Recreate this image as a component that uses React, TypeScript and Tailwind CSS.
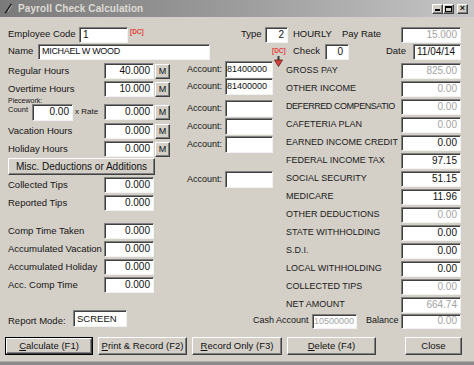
import React from "react";

const fieldBase =
  "box-border flex items-center bg-white border border-t-[#808080] border-l-[#808080] border-r-[#f2f2f2] border-b-[#f2f2f2] shadow-[inset_1px_1px_0_#404040] overflow-hidden whitespace-nowrap leading-none";

function Field({
  className = "",
  children,
  grey = false,
  left = false,
}: {
  className?: string;
  children?: React.ReactNode;
  grey?: boolean;
  left?: boolean;
}) {
  return (
    <div
      className={[
        fieldBase,
        left ? "justify-start pl-[3px]" : "justify-end pr-[3px]",
        grey ? "text-[#a3a3a3]" : "text-[#111]",
        className,
      ].join(" ")}
    >
      {children}
    </div>
  );
}

const raised =
  "box-border bg-[#d4d0c8] border border-t-white border-l-white border-r-[#404040] border-b-[#404040] shadow-[inset_-1px_-1px_0_#808080] flex items-center justify-center leading-none text-[#111]";

function MBtn() {
  return <div className={raised + " ml-[1px] w-[15px] h-[15px] text-[9px]"}>M</div>;
}

function LeftRow({ label, value, m = false }: { label: string; value: string; m?: boolean }) {
  return (
    <div className="flex items-center h-[18px]">
      <span className="w-[96px] whitespace-nowrap">{label}</span>
      <Field className="w-[50px] h-[16px] text-[10px]">{value}</Field>
      {m && <MBtn />}
    </div>
  );
}

function RightRow({
  label,
  value,
  grey = false,
  last = false,
  tight = false,
}: {
  label: string;
  value: string;
  grey?: boolean;
  last?: boolean;
  tight?: boolean;
}) {
  return (
    <div className={"flex items-center " + (last ? "h-[17px]" : "h-[18px]")}>
      <span
        className={
          "w-[115px] whitespace-nowrap text-[9px] text-[#1a1a1a] " +
          (tight ? "tracking-[-0.45px]" : "")
        }
      >
        {label}
      </span>
      <Field grey={grey} className="w-[60px] h-[16px] text-[10px]">
        {value}
      </Field>
    </div>
  );
}

function AccRow({
  value = "",
  className = "",
  children,
}: {
  value?: string;
  className?: string;
  children?: React.ReactNode;
}) {
  return (
    <div className={"relative flex items-center h-[17px] " + className}>
      <span className="w-[54px] pl-[16px] text-[9px] whitespace-nowrap">Account:</span>
      <Field left className="w-[48px] h-[17px] text-[9px] !pl-[1px]">
        {value}
      </Field>
      {children}
    </div>
  );
}

function DC({ className = "" }: { className?: string }) {
  return (
    <span className={"text-[6.5px] font-bold text-[#e0403a] leading-none " + className}>[DC]</span>
  );
}

export default function App() {
  return (
    <div className="w-[474px] h-[365px] bg-[#d4d0c8] flex flex-col overflow-hidden text-[#141414] font-['Liberation_Sans',Arial,sans-serif] text-[9.5px]">
      {/* Title bar */}
      <div className="h-[17px] shrink-0 flex items-center bg-linear-to-r from-[#7a7a7a] via-[#9c9c9c] to-[#c6c6c6] pl-[4px] pr-[6px]">
        <svg width="9" height="11" viewBox="0 0 9 11">
          <path d="M1 10 L2.5 8.5 L7.5 1" stroke="#1e1e1e" strokeWidth="1.6" fill="none" />
          <path d="M3.5 9 L8 2" stroke="#e8e8e8" strokeWidth="0.6" fill="none" />
        </svg>
        <span className="ml-[5px] text-[10px] font-bold text-[#dedbd5] tracking-[0.1px]">
          Payroll Check Calculation
        </span>
        <div className="ml-auto flex items-center">
          <div className={raised + " w-[11px] h-[10px] !items-end pb-[2px]"}>
            <div className="w-[5px] h-[2px] bg-black" />
          </div>
          <div className={raised + " w-[11px] h-[10px]"}>
            <div className="w-[7px] h-[6px] border border-black border-t-2" />
          </div>
          <div className={raised + " ml-[3px] w-[11px] h-[10px] text-[9px] font-bold"}>×</div>
        </div>
      </div>

      {/* Header rows */}
      <div className="mt-[9px] flex items-center h-[17px] pl-2">
        <div className="w-[233px] flex items-center">
          <span className="w-[71px] whitespace-nowrap">Employee Code</span>
          <Field left className="w-[49px] h-[16px] text-[10px]">
            1
          </Field>
          <DC className="ml-[2px] -mt-[4px]" />
        </div>
        <span className="w-[24px]">Type</span>
        <Field className="w-[23px] h-[16px] text-[10px]">2</Field>
        <span className="w-[54px] pl-[5px]">HOURLY</span>
        <span className="w-[59px]">Pay Rate</span>
        <Field grey className="w-[60px] h-[16px] text-[10px]">
          15.000
        </Field>
      </div>
      <div className="flex items-center h-[17px] pl-2">
        <span className="w-[30px]">Name</span>
        <Field left className="w-[172px] h-[16px] text-[9px] tracking-[-0.3px]">
          MICHAEL W WOOD
        </Field>
        <span className="w-[83px]" />
        <span className="w-[32px]">Check</span>
        <Field className="w-[24px] h-[16px] text-[10px] !pr-[5px]">0</Field>
        <span className="w-[64px] text-right pr-[7px]">Date</span>
        <Field left className="w-[48px] h-[16px] text-[10px]">
          11/04/14
        </Field>
      </div>

      {/* Main section */}
      <div className="flex pl-2">
        {/* Left column */}
        <div className="w-[163px] pt-[2px] flex flex-col">
          <LeftRow label="Regular Hours" value="40.000" m />
          <LeftRow label="Overtime Hours" value="10.000" m />
          <div className="h-[24px] flex flex-col">
            <span className="text-[7px] leading-[7px] h-[6px] -mt-[1px]">Piecework:</span>
            <div className="flex items-center h-[18px]">
              <span className="w-[24px] text-[7.5px] self-start mt-[3px] leading-[8px]">Count</span>
              <Field className="w-[41px] h-[17px] text-[10px]">0.00</Field>
              <span className="w-[31px] pl-[2px] text-[8px]">x Rate</span>
              <Field className="w-[50px] h-[16px] text-[10px]">0.000</Field>
              <MBtn />
            </div>
          </div>
          <LeftRow label="Vacation Hours" value="0.000" m />
          <LeftRow label="Holiday Hours" value="0.000" m />
          <div className={raised + " w-[147px] h-[17px] text-[10px]"}>Misc. Deductions or Additions</div>
          <div className="h-[1px]" />
          <LeftRow label="Collected Tips" value="0.000" />
          <LeftRow label="Reported Tips" value="0.000" />
          <div className="h-[10px]" />
          <LeftRow label="Comp Time Taken" value="0.000" />
          <LeftRow label="Accumulated Vacation" value="0.000" />
          <LeftRow label="Accumulated Holiday" value="0.000" />
          <LeftRow label="Acc. Comp Time" value="0.000" />
        </div>

        {/* Middle (Account) column */}
        <div className="w-[115px] pt-[1px] flex flex-col">
          <AccRow value="81400000">
            <div className="absolute left-[101px] -top-[13px] flex flex-col items-center">
              <DC />
              <svg width="9" height="11" viewBox="0 0 9 11" className="mt-[1px]">
                <line x1="4.5" y1="0" x2="4.5" y2="4" stroke="#3a3a3a" strokeWidth="2" />
                <polygon points="0.5,4 8.5,4 4.5,10.5" fill="#d8413a" stroke="#5a1a18" strokeWidth="0.8" />
              </svg>
            </div>
          </AccRow>
          <AccRow value="81400000" />
          <AccRow className="mt-[5px]" />
          <AccRow className="mt-[1px]" />
          <AccRow className="mt-[1px]" />
          <AccRow className="mt-[18px]" />
        </div>

        {/* Right column */}
        <div className="pt-[2px] flex flex-col">
          <RightRow label="GROSS PAY" value="825.00" grey />
          <RightRow label="OTHER INCOME" value="0.00" grey />
          <RightRow label="DEFERRED COMPENSATIO" value="0.00" grey tight />
          <RightRow label="CAFETERIA PLAN" value="0.00" grey />
          <RightRow label="EARNED INCOME CREDIT" value="0.00" />
          <RightRow label="FEDERAL INCOME TAX" value="97.15" />
          <RightRow label="SOCIAL SECURITY" value="51.15" />
          <RightRow label="MEDICARE" value="11.96" />
          <RightRow label="OTHER DEDUCTIONS" value="0.00" grey />
          <RightRow label="STATE WITHHOLDING" value="0.00" />
          <RightRow label="S.D.I." value="0.00" />
          <RightRow label="LOCAL WITHHOLDING" value="0.00" />
          <RightRow label="COLLECTED TIPS" value="0.00" grey />
          <RightRow label="NET AMOUNT" value="664.74" grey last />
        </div>
      </div>

      {/* Report mode / cash account row */}
      <div className="flex items-center h-[16px] pl-2">
        <span className="w-[65px]">Report Mode:</span>
        <Field left className="w-[54px] h-[17px] text-[9.5px] -mt-[5px]">
          SCREEN
        </Field>
        <span className="w-[126px]" />
        <span className="w-[59px] whitespace-nowrap text-[9px]">Cash Account</span>
        <Field left grey className="w-[45px] h-[15px] text-[9px] !pl-[1px]">
          10500000
        </Field>
        <span className="w-[44px] pl-[9px] text-[9px]">Balance</span>
        <Field grey className="w-[60px] h-[15px] text-[10px]">
          0.00
        </Field>
      </div>

      {/* Buttons */}
      <div className="mt-[8px] flex items-center h-[18px] pl-[5px] gap-[5px]">
        <div className="w-[88px] h-[18px] border border-black box-border">
          <div className={raised + " w-full h-full text-[9.5px]"}>
            <span>
              <span className="underline">C</span>alculate (F1)
            </span>
          </div>
        </div>
        <div className={raised + " w-[89px] h-[18px] text-[9.5px]"}>
          <span>
            <span className="underline">P</span>rint &amp; Record (F2)
          </span>
        </div>
        <div className={raised + " w-[90px] h-[18px] text-[9.5px]"}>
          <span>
            <span className="underline">R</span>ecord Only (F3)
          </span>
        </div>
        <div className={raised + " w-[89px] h-[18px] text-[9.5px]"}>
          <span>
            <span className="underline">D</span>elete (F4)
          </span>
        </div>
        <div className={raised + " ml-[24px] w-[57px] h-[18px] text-[9.5px]"}>Close</div>
      </div>

      <div className="flex-1" />
      <div className="h-[4px] shrink-0 bg-[#8a8a8a] border-t border-t-[#b0aca6]" />
    </div>
  );
}
